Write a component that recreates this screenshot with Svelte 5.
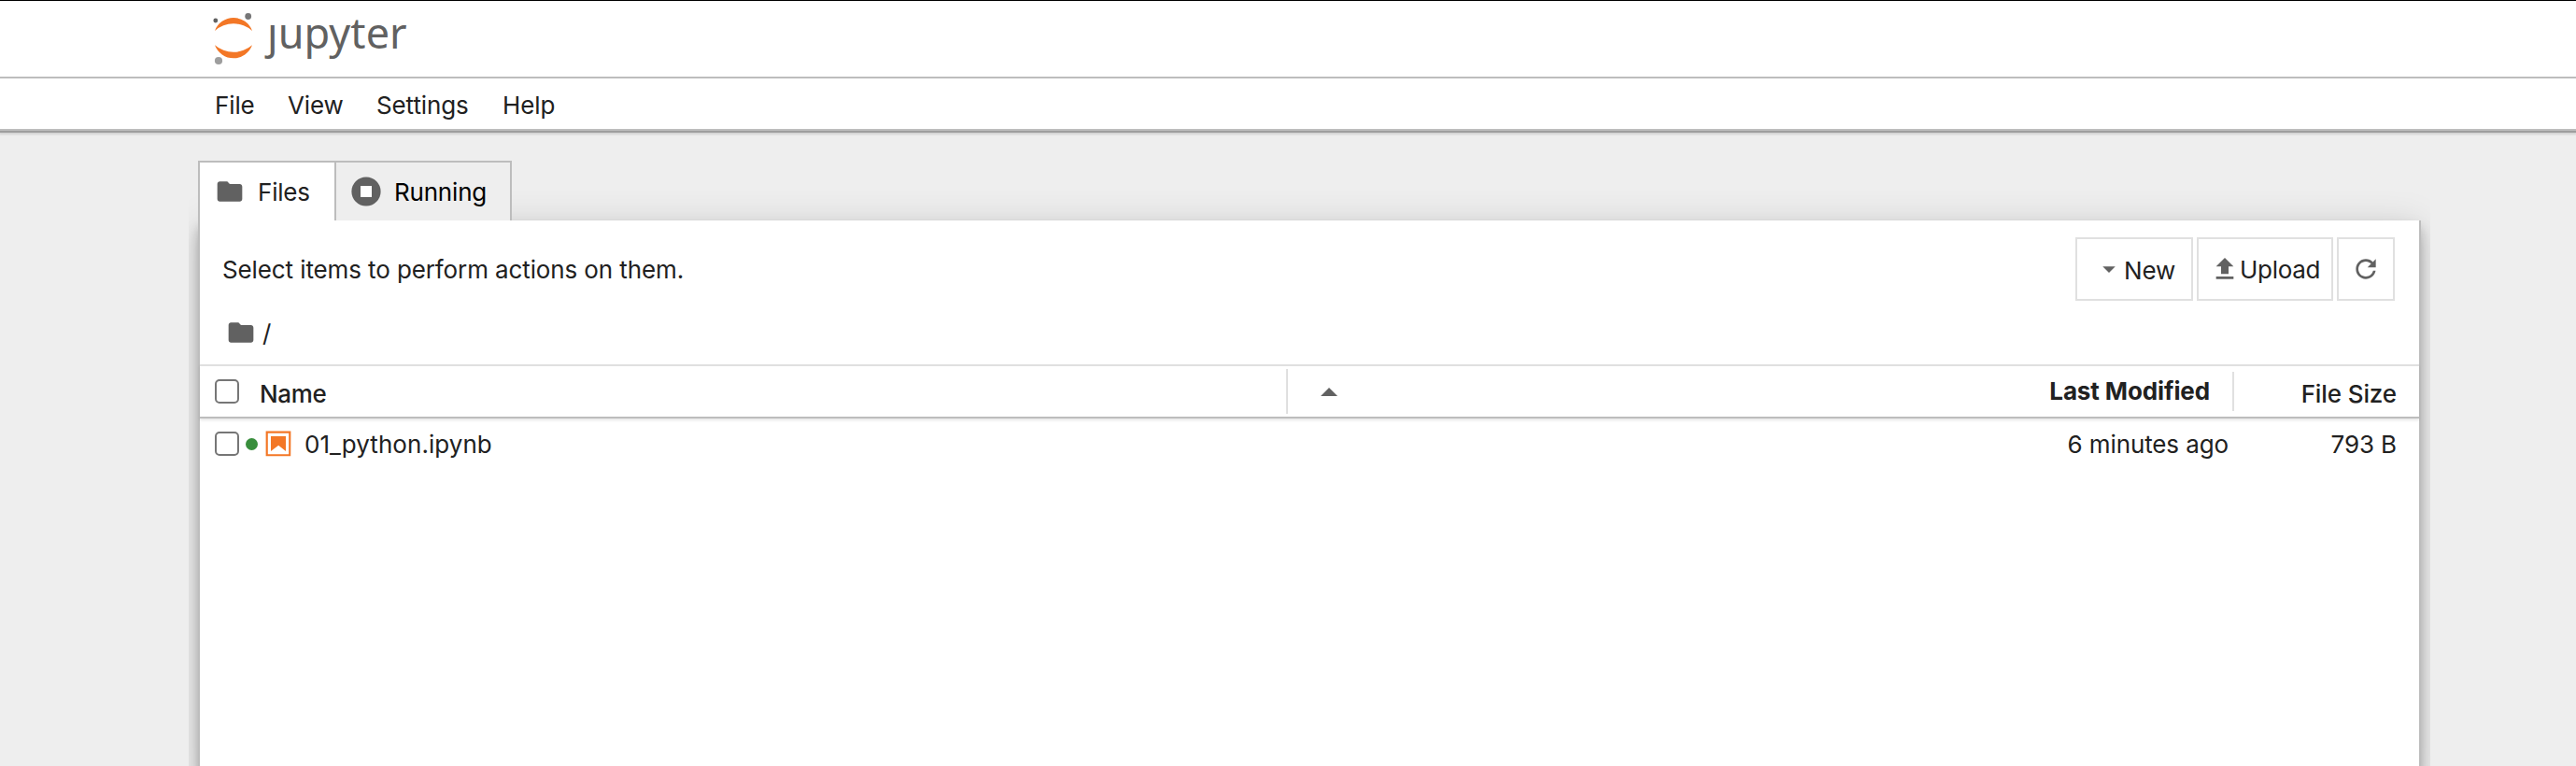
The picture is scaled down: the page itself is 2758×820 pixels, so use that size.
<script>
  const menus = [
    { label: 'File', width: 78 },
    { label: 'View', width: 95 },
    { label: 'Settings', width: 135 },
    { label: 'Help', width: 80 }
  ];
  const files = [{ name: '01_python.ipynb', modified: '6 minutes ago', size: '793 B' }];
</script>

{#snippet folder()}
  <svg class="icon" viewBox="0 0 24 24"><path fill="#616161" d="M10 4H4c-1.1 0-1.99.9-1.99 2L2 18c0 1.1.9 2 2 2h16c1.1 0 2-.9 2-2V8c0-1.1-.9-2-2-2h-8l-2-2z" /></svg>
{/snippet}

<div class="page">
  <header>
    <svg class="mark" viewBox="0 0 48 62">
      <path fill="#f37726" d="M4 33A21.3 21.3 0 0 1 44 33A29.8 29.8 0 0 0 4 33zM4 48.3A21.3 21.3 0 0 0 44 48.3A30.5 30.5 0 0 1 4 48.3z" />
      <circle cx="4.8" cy="22" r="2.4" fill="#616161" />
      <circle cx="39.7" cy="17.5" r="3.4" fill="#767677" />
      <circle cx="8" cy="65" r="4.1" fill="#9e9e9e" />
    </svg>
    <span class="wordmark"><span class="stem">j</span>upyter</span>
  </header>
  <nav>
    {#each menus as m}
      <span style="width:{m.width}px">{m.label}</span>
    {/each}
  </nav>
  <main>
    <div class="tabs">
      <div class="tab current">{@render folder()}<span>Files</span></div>
      <div class="tab running">
        <svg class="icon" viewBox="0 0 32 32"><circle cx="16" cy="16" r="15.6" fill="#616161" /><rect x="10" y="10" width="12" height="12" fill="#fff" /></svg>
        <span>Running</span>
      </div>
    </div>
    <section class="panel">
      <div class="toolbar">
        <span class="hint">Select items to perform actions on them.</span>
        <button class="new">
          <svg class="icon" viewBox="0 0 18 18"><path fill="#616161" d="M5.2 7.5L9 11.2l3.8-3.7z" /></svg><span>New</span>
        </button>
        <button class="upload">
          <svg class="icon" viewBox="0 0 24 24"><path fill="#616161" d="M9 16h6v-6h4l-7-7-7 7h4zm-4 2h14v2H5z" /></svg><span>Upload</span>
        </button>
        <button class="refresh" aria-label="Refresh">
          <svg class="icon" viewBox="0 0 18 18"><path fill="#616161" d="M9 13.5c-2.49 0-4.5-2.01-4.5-4.5S6.51 4.5 9 4.5c1.24 0 2.36.52 3.17 1.33L10 8h5V3l-1.76 1.76C12.15 3.68 10.66 3 9 3 5.69 3 3.01 5.69 3.01 9S5.69 15 9 15c2.97 0 5.43-2.16 5.9-5h-1.52c-.46 2-2.24 3.5-4.38 3.5z" /></svg>
        </button>
      </div>
      <div class="crumbs">{@render folder()}<span>/</span></div>
      <div class="head">
        <div class="name"><i class="check"></i><span>Name</span></div>
        <div class="modified">
          <svg class="caret" viewBox="0 0 18 9"><path fill="#616161" d="M0 9L9 0l9 9z" /></svg>
          <span>Last Modified</span>
        </div>
        <div class="size">File Size</div>
      </div>
      {#each files as f}
        <div class="row">
          <i class="check"></i><i class="dot"></i>
          <svg class="icon" viewBox="0 0 22 22"><path fill="#f37726" d="M18.7 3.3v15.4H3.3V3.3h15.4m1.5-1.5H1.8v18.3h18.3l.1-18.3z" /><path fill="#f37726" d="M16.5 16.5l-5.4-4.3-5.6 4.3v-11h11z" /></svg>
          <span class="filename">{f.name}</span>
          <span class="when">{f.modified}</span>
          <span class="bytes">{f.size}</span>
        </div>
      {/each}
    </section>
  </main>
</div>

<style>
  :global(body) { margin: 0; }
  .page, .page * { box-sizing: border-box; }
  .page {
    height: 820px; overflow: hidden; display: flex; flex-direction: column;
    background: #eee; color: #212121;
    font: 26px/32px Inter, "Liberation Sans", sans-serif; letter-spacing: -.11px; white-space: nowrap;
  }
  header {
    height: 84px; flex: none; display: flex; padding-left: 226px;
    background: #fff; border-top: 1px solid #000; border-bottom: 2px solid #bdbdbd;
  }
  .mark { width: 48px; height: 62px; margin-top: -1px; overflow: visible; }
  .wordmark { font: 45px/60px "Noto Sans", sans-serif; color: #616161; margin: 4px 0 0 12px; letter-spacing: .05px; }
  .stem { display: inline-block; clip-path: inset(22px -4px 0 -10px); }
  nav {
    height: 56px; flex: none; display: flex; align-items: center; padding: 4px 0 0 230px;
    background: #fff; border-bottom: 2px solid #bdbdbd;
    box-shadow: 0 2px 0 #9e9e9e, 0 3px 2px 1px rgba(0, 0, 0, .12);
    clip-path: inset(0 0 -10px 0);
  }
  main { flex: 1; min-height: 0; width: 2400px; margin-left: 202px; padding: 32px 10px 0; overflow: clip; display: flex; flex-direction: column; clip-path: inset(10px 0 0 0); }
  .icon { width: 32px; height: 32px; flex: none; display: block; }
  .tabs { display: flex; height: 64px; flex: none; position: relative; z-index: 1; }
  .tab { display: flex; align-items: center; border: 2px solid #bdbdbd; border-bottom: 0; }
  .current { width: 146px; border-right: 0; background: #fff; padding-left: 16px; }
  .tab span { margin: 2px 0 0 14px; letter-spacing: -.2px; }
  .running { width: 190px; padding-left: 16px; color: #000; background: #eee; }
  .panel { flex: 1; background: #fff; border: solid #bdbdbd; border-width: 0 2px; box-shadow: 0 6px 10px -2px rgba(0, 0, 0, .2), 0 12px 20px rgba(0, 0, 0, .14), 0 2px 36px rgba(0, 0, 0, .12); margin-bottom: -20px; }
  .toolbar { height: 104px; padding: 0 26px 0 24px; display: flex; align-items: center; gap: 4px; }
  .hint { flex: 1; padding-top: 2px; }
  button { height: 68px; border: 2px solid #e0e0e0; background: #fff; padding: 0; font: inherit; letter-spacing: inherit; color: inherit; display: flex; align-items: center; }
  .new { width: 126px; padding-left: 18px; }
  .new span { margin: 3px 0 0 0; }
  .upload { width: 146px; padding-left: 12px; }
  .upload span { margin-top: 2px; letter-spacing: -.3px; }
  .refresh { width: 62px; padding-left: 13px; }
  .crumbs { height: 50px; padding-left: 28px; display: flex; }
  .crumbs span { margin: 1px 0 0 7px; }
  .head { height: 58px; border-top: 2px solid #e0e0e0; border-bottom: 2px solid #bdbdbd; display: flex; align-items: center; box-shadow: 0 2px 3px rgba(0, 0, 0, .1); font-weight: 500; }
  .name { width: 1165px; height: 48px; display: flex; align-items: center; padding-left: 16px; border-right: 2px solid #e0e0e0; }
  .name span { margin-left: 22px; position: relative; top: 3px; letter-spacing: -.3px; }
  .check { width: 26px; height: 26px; border: 2px solid #767676; border-radius: 5px; flex: none; }
  .modified { flex: 1; height: 42px; display: flex; align-items: center; justify-content: space-between; padding: 0 24px 0 35px; border-right: 2px solid #e0e0e0; font-weight: 700; }
  .caret { width: 18px; height: 9px; }
  .size { width: 198px; text-align: right; padding-right: 24px; position: relative; top: 3px; }
  .row { height: 54px; display: flex; align-items: center; padding: 0 24px 0 16px; }
  .dot { width: 13px; height: 13px; border-radius: 50%; background: #388e3c; margin: 0 6px 0 7px; }
  .row span { padding-top: 2px; }
  .filename { flex: 1; margin-left: 12px; letter-spacing: .05px; }
  .bytes { width: 180px; text-align: right; }
</style>
